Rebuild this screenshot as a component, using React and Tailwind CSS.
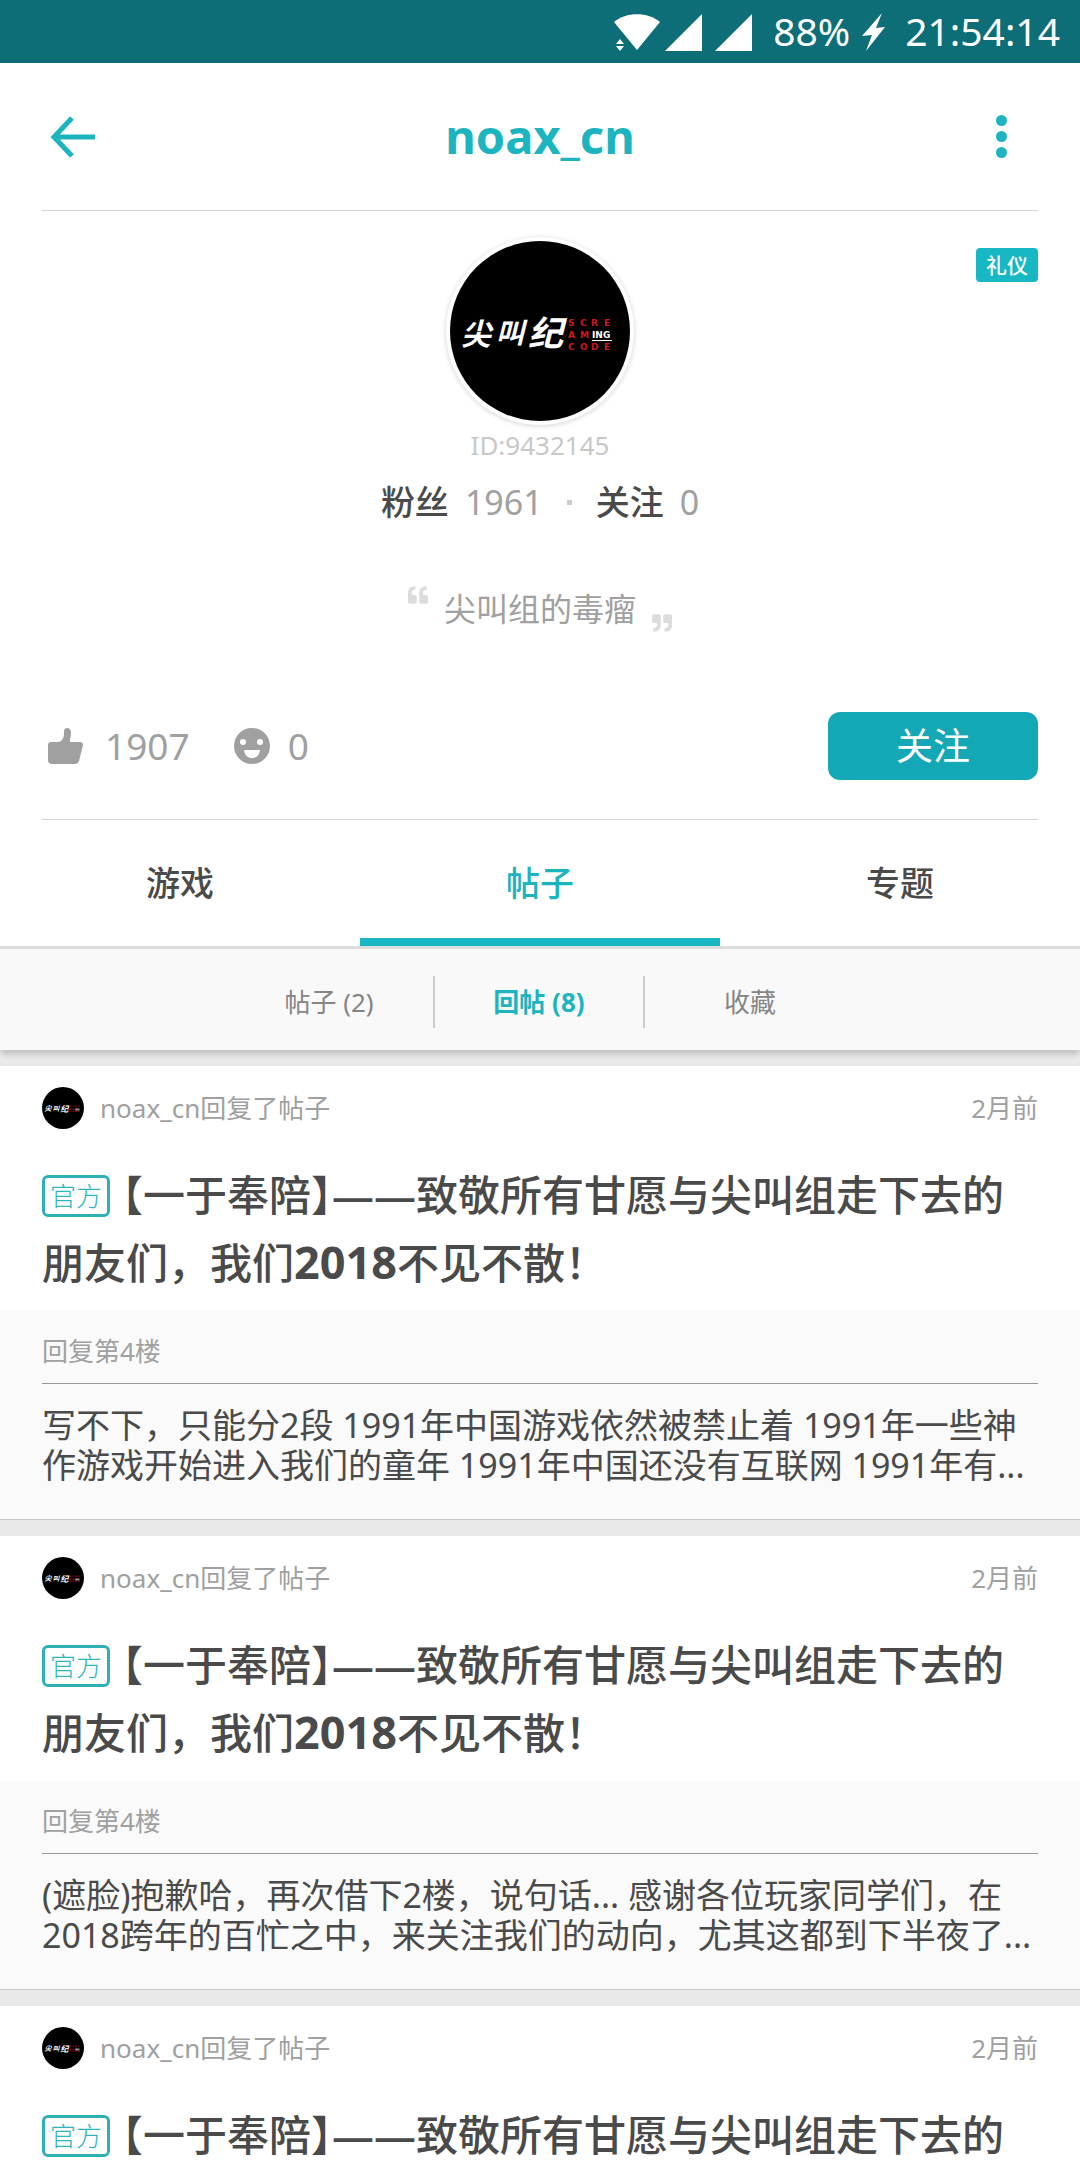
import React, { useState } from 'react';
import { FaQuoteLeft, FaQuoteRight } from 'react-icons/fa';

const posts = [
  {
    id: 1,
    floor: '回复第4楼',
    body: '写不下，只能分2段 1991年中国游戏依然被禁止着 1991年一些神作游戏开始进入我们的童年 1991年中国还没有互联网 1991年有...',
  },
  {
    id: 2,
    floor: '回复第4楼',
    body: '(遮脸)抱歉哈，再次借下2楼，说句话... 感谢各位玩家同学们，在2018跨年的百忙之中，来关注我们的动向，尤其这都到下半夜了...',
  },
  { id: 3 },
];

const tabs = ['游戏', '帖子', '专题'];
const subTabs = ['帖子 (2)', '回帖 (8)', '收藏'];

const Avatar = ({ className }) => (
  <svg viewBox="0 0 180 180" className={className} role="img" aria-label="noax_cn">
    <circle cx="90" cy="90" r="90" fill="#000" />
    <g fill="#fff" fontFamily="'Noto Sans CJK SC', sans-serif" fontStyle="italic" fontWeight="700">
      <text x="11" y="104" fontSize="30">尖</text>
      <text x="46" y="102" fontSize="28">叫</text>
      <text x="78" y="105" fontSize="35">纪</text>
    </g>
    <g fill="#d0161e" fontFamily="'DejaVu Sans', sans-serif" fontSize="9" fontWeight="700">
      <text x="118 130 141 154" y="85">SCRE</text>
      <text x="118 130" y="97">AM</text>
      <text x="118 130 141 154" y="109">CODE</text>
    </g>
    <text x="142" y="97" fill="#fff" fontFamily="'DejaVu Sans', sans-serif" fontSize="9" fontWeight="700">ING</text>
    <rect x="142" y="99" width="20" height="1" fill="#fff" />
  </svg>
);

const StatusBar = () => (
  <div className="flex h-[63px] items-center justify-end bg-[#0d6e77] pr-5 text-[39px] text-white">
    <svg viewBox="0 0 138 38" className="mr-[21px] h-[38px] w-[138px]" fill="#fff">
      <path d="M0 9C12 -1.500 34 -1.500 46 9L23 37Z" />
      <path d="M0 24H11V38H0Z" fill="#0d6e77" />
      <path d="M2 31L6 26L10 31ZM2 33L6 38L10 33Z" />
      <path d="M51 38L88 1V38Z" />
      <path d="M101 38L138 1V38Z" />
    </svg>
    <span>88%</span>
    <svg viewBox="0 0 24 38" className="mr-[19px] ml-3 h-[38px] w-6" fill="#fff">
      <path d="M20 0L0 23L10 22L4 38L23 14L14 15Z" />
    </svg>
    <span>21:54:14</span>
  </div>
);

const Header = () => (
  <header className="mx-[42px] flex h-[148px] items-center justify-between border-b border-[#d3d3d3]">
    <button type="button" aria-label="返回" className="pl-2">
      <svg viewBox="0 0 46 42" className="h-[42px] w-[46px]" fill="none" stroke="#1cb4bf" strokeWidth="5">
        <path d="M22 2L4 21L22 40M4 21H45" />
      </svg>
    </button>
    <h1 className="text-[47px] font-bold text-[#1cb4bf]">noax_cn</h1>
    <button type="button" aria-label="更多" className="flex w-[54px] flex-col items-center gap-[5px] pr-5">
      <span className="h-[11px] w-[11px] shrink-0 rounded-full bg-[#1cb4bf]" />
      <span className="h-[11px] w-[11px] shrink-0 rounded-full bg-[#1cb4bf]" />
      <span className="h-[11px] w-[11px] shrink-0 rounded-full bg-[#1cb4bf]" />
    </button>
  </header>
);

const Profile = () => (
  <section className="mx-[42px] border-b border-[#d3d3d3] pb-[39px]">
    <div className="grid grid-cols-[1fr_auto_1fr] pt-[26px]">
      <span />
      <div className="rounded-full bg-white p-1 shadow-[0_1px_5px_rgba(0,0,0,0.18)]">
        <Avatar className="h-[180px] w-[180px]" />
      </div>
      <span className="mt-[11px] h-[34px] justify-self-end rounded-sm bg-[#17b8c4] px-[10px] text-[21px] leading-[34px] font-medium text-white">
        礼仪
      </span>
    </div>

    <p className="mt-[2px] text-center text-[26px] leading-9 text-[#c8c8c8]">ID:9432145</p>

    <div className="mt-[14px] flex items-center justify-center text-[34px] leading-[50px]">
      <span className="font-medium text-[#4a4a4a]">粉丝</span>
      <span className="ml-4 text-[#a0a0a0]">1961</span>
      <span className="mx-6 h-[5px] w-[5px] bg-[#ccc]" />
      <span className="font-medium text-[#4a4a4a]">关注</span>
      <span className="ml-4 text-[#a0a0a0]">0</span>
    </div>

    <div className="mt-[58px] flex h-12 justify-center">
      <FaQuoteLeft className="h-5 w-5 text-[#dcdcdc]" />
      <p className="mx-4 text-[32px] leading-[48px] text-[#a0a0a0]">尖叫组的毒瘤</p>
      <FaQuoteRight className="h-5 w-5 self-end text-[#dcdcdc]" />
    </div>

    <div className="mt-[79px] flex items-center text-[37px] text-[#a0a0a0]">
      <svg viewBox="0 0 35 36" className="ml-[6px] h-9 w-[35px]" fill="#a0a0a0">
        <path d="M3 14H11C14 13 16 10 16 5V3C16 -1 23 -1 23 4C23 8 22 11 22 14H32Q35 14 35 17L31 33Q30 36 27 36H4Q0 36 0 32V17Q0 14 3 14Z" />
      </svg>
      <span className="ml-[22px]">1907</span>
      <svg viewBox="0 0 36 36" className="ml-11 h-9 w-9">
        <circle cx="18" cy="18" r="18" fill="#a0a0a0" />
        <circle cx="9" cy="14" r="3" fill="#fff" />
        <circle cx="26" cy="14" r="3" fill="#fff" />
        <path d="M10 22H26C25 33 11 33 10 22Z" fill="#fff" />
      </svg>
      <span className="ml-[18px]">0</span>
      <button type="button" className="ml-auto h-[68px] w-[210px] rounded-xl bg-[#14a7b6] text-white">
        关注
      </button>
    </div>
  </section>
);

const PostCard = ({ post }) => (
  <article className="border-b border-[#c8c8c8] bg-white">
    <div className="px-[42px] pt-[21px] pb-[15px]">
      <div className="flex items-center text-[26px] leading-[42px] text-[#a0a0a0]">
        <Avatar className="h-[42px] w-[42px]" />
        <span className="ml-4">noax_cn回复了帖子</span>
        <time className="ml-auto">2月前</time>
      </div>
      <h2 className="mt-8 text-[42px] leading-[67px] font-medium text-[#4a4a4a]">
        <span className="mt-[14px] mr-3 inline-block rounded-md border-3 border-[#2fb0b8] px-[5px] align-top text-[26px] leading-9 font-light text-[#2fb5bd]">
          官方
        </span>
        <span className="[font-feature-settings:'halt']">【</span>一于奉陪
        <span className="[font-feature-settings:'halt']">】</span>
        ——致敬所有甘愿与尖叫组走下去的朋友们，我们<span className="text-[45px] font-bold">2018</span>不见不散！
      </h2>
    </div>
    {post.body && (
      <div className="bg-[#fafafa] px-[42px] pt-5 pb-[34px]">
        <p className="border-b border-[#999] pb-3 text-[26px] leading-10 text-[#a0a0a0]">{post.floor}</p>
        <p className="mt-[21px] text-[34px] leading-10 text-[#4a4a4a]">{post.body}</p>
      </div>
    )}
  </article>
);

export default function App() {
  const [tab, setTab] = useState('帖子');
  const [subTab, setSubTab] = useState('回帖 (8)');

  return (
    <div className="h-screen overflow-hidden bg-white font-['Noto_Sans','Noto_Sans_CJK_SC',sans-serif]" lang="zh-CN">
      <StatusBar />
      <Header />
      <Profile />

      {/* Main tabs */}
      <nav className="grid grid-cols-3 border-b-3 border-[#dcdcdc]">
        {tabs.map((name) => (
          <button
            key={name}
            type="button"
            onClick={() => setTab(name)}
            className={`h-[126px] border-b-8 pt-2 text-[34px] font-medium ${
              tab === name ? 'border-[#17b8c4] text-[#1cb4bf]' : 'border-transparent text-[#4a4a4a]'
            }`}
          >
            {name}
          </button>
        ))}
      </nav>

      {/* Sub tabs */}
      <nav className="relative flex h-[101px] items-center justify-center divide-x-2 divide-[#ccc] bg-[#f9f9f9] pt-1 shadow-[0_5px_6px_-1px_rgba(0,0,0,0.18)]">
        {subTabs.map((name) => (
          <button
            key={name}
            type="button"
            onClick={() => setSubTab(name)}
            className={`h-[52px] w-[210px] pt-[2px] text-[26px] ${
              subTab === name ? 'font-bold text-[#1cb4bf]' : 'text-[#858585]'
            }`}
          >
            {name}
          </button>
        ))}
      </nav>

      {/* Replies */}
      <main className="flex flex-col gap-4 bg-[#e9e9e9] pt-4">
        {posts.map((post) => (
          <PostCard key={post.id} post={post} />
        ))}
      </main>
    </div>
  );
}
